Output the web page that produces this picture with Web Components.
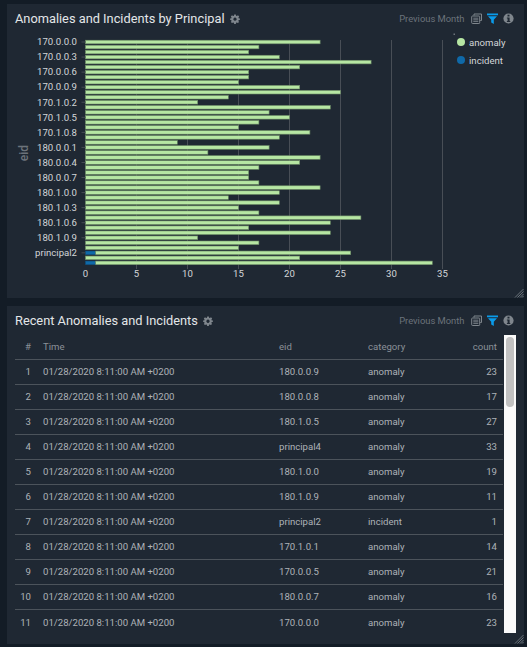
<!DOCTYPE html>
<html><head><meta charset="utf-8">
<style>
html,body{margin:0;padding:0;background:#131c26;}
body{width:527px;height:647px;overflow:hidden;font-family:Roboto,"Liberation Sans",sans-serif;}
#page{display:flex;flex-direction:column;gap:8px;padding:4px 3px 3px 7px;box-sizing:border-box;height:647px;}
</style></head><body>
<div id="page">
<x-panel heading="Anomalies and Incidents by Principal" style="height:294px"><x-bar-chart></x-bar-chart></x-panel>
<x-panel heading="Recent Anomalies and Incidents" style="height:338px"><x-data-table></x-data-table></x-panel>
</div>
<script>
const gear='<svg width="10" height="10" viewBox="0 0 24 24"><path fill="#7f868d" fill-rule="evenodd" d="M10 1h4l.6 3.100 2 .8L19.200 3.200 22 6l-1.700 2.600.8 2L24 11v3l-3.100.6-.8 2L21.800 19 19 21.800l-2.600-1.700-2 .8L14 24h-4l-.6-3.100-2-.8L4.800 21.800 2 19l1.700-2.400-.8-2L0 14v-3l2.900-.4.8-2L2 6l2.800-2.800 2.600 1.700 2-.8zM12 8.500a4 4 0 1 0 .01 0z"/></svg>';
const copy='<svg width="11" height="11" viewBox="0 0 11 11"><g fill="none" stroke="#7f868d"><path d="M3 2.500V1h7.500v6.500H9.200" /><rect x=".7" y="3" width="8" height="7.500" rx=".8" fill="#1f2833"/><path d="M2.300 5.200h5M2.300 6.800h5M2.300 8.400h5" stroke-width=".9"/></g></svg>';
const funnel='<svg width="11" height="11" viewBox="0 0 11 11"><path fill="#0a9bea" d="M0 .5h11v1.700H0zM1 3.200h9L6.800 6.800V11L4.200 9.500V6.800z"/></svg>';
const info='<svg width="11" height="11" viewBox="0 0 11 11"><circle cx="5.500" cy="5.500" r="5.100" fill="#7f868d"/><rect x="4.500" y="1.700" width="2" height="1.800" fill="#1f2833"/><path fill="#1f2833" d="M3.900 4.400h2.700v3.600h.7v1H3.900V8h.7V5.400h-.7z"/></svg>';

class XPanel extends HTMLElement{
  constructor(){super();this.attachShadow({mode:'open'}).innerHTML=`<style>
  :host{display:flex;flex-direction:column;position:relative;background:#1f2833;color:#e3e6e8;font-family:Roboto,"Liberation Sans",sans-serif;}
  header{display:flex;align-items:center;height:29px;padding:0 10.500px 0 8px;flex:none;}
  h2{margin:0;font-weight:400;font-size:12.800px;color:#e3e6e8;white-space:nowrap;}
  .gear{display:flex;margin-left:5px;}
  .range{margin-left:auto;font-size:9.400px;color:#6c737b;}
  .ic{display:flex;gap:5px;margin-left:6px;}
  .ic span{display:flex;}
  main{flex:1;min-height:0;position:relative;}
  .grip{position:absolute;right:.5px;bottom:0;width:10px;height:10px;}
  </style>
  <header><h2></h2><span class="gear">${gear}</span><span class="range">Previous Month</span>
  <span class="ic"><span>${copy}</span><span>${funnel}</span><span>${info}</span></span></header>
  <main><slot></slot></main>
  <svg class="grip" viewBox="0 0 10 10"><path d="M1 9.500L9.500 1M3.500 9.500L9.500 3.500M6 9.500L9.500 6M8 9.500L9.500 8" stroke="#7f868d" stroke-width=".8" fill="none"/></svg>`;
  this.shadowRoot.querySelector('h2').textContent=this.getAttribute('heading');}
}
customElements.define('x-panel',XPanel);

const vals=[23,17,16,19,28,21,16,16,15,21,25,14,11,24,18,20,17,15,22,19,9,18,12,23,21,17,16,16,17,23,19,14,19,15,17,27,24,16,24,11,17,15,26,21,34];
const inc={42:1,44:1};
const labels=['170.0.0.0','170.0.0.3','170.0.0.6','170.0.0.9','170.1.0.2','170.1.0.5','170.1.0.8','180.0.0.1','180.0.0.4','180.0.0.7','180.1.0.0','180.1.0.3','180.1.0.6','180.1.0.9','principal2'];
class XBarChart extends HTMLElement{
  constructor(){super();
    const X0=78.5,U=10.2,Y0=9,P=5.02,H=3.600;
    let s='';
    for(let k=1;k<=7;k++){const x=X0+k*5*U;s+=`<line x1="${x}" x2="${x}" y1="7" y2="236" stroke="#484e56"/>`;}
    vals.forEach((v,i)=>{const y=Y0+i*P-H/2,st=inc[i]||0;
      if(st)s+=`<rect x="${X0}" y="${y}" width="${st*U}" height="${H}" fill="#0f69a8" stroke="#0e4f7d" stroke-width=".5"/>`;
      s+=`<rect x="${X0+st*U}" y="${y}" width="${(v-st)*U}" height="${H}" fill="#b6e6a3" stroke="#6d8c66" stroke-width=".6"/>`;});
    labels.forEach((l,i)=>{const y=Y0+i*3*P;
      s+=`<line x1="${X0-4}" x2="${X0}" y1="${y}" y2="${y}" stroke="#454c54"/><text x="${X0-8.500}" y="${y+3.300}" text-anchor="end" class="t">${l}</text>`;});
    for(let k=0;k<=7;k++){s+=`<text x="${X0+k*5*U}" y="244" text-anchor="middle" class="t">${k*5}</text>`;}
    s+=`<text transform="translate(21 120) rotate(-90)" text-anchor="middle" class="ax">eid</text>`;
    s+=`<rect x="446.500" y=".5" width="1.500" height="1.500" fill="#6c737b"/>`;
    s+=`<circle cx="454" cy="9" r="4" fill="#b6e6a3"/><text x="462" y="12.500" class="l">anomaly</text>`;
    s+=`<circle cx="454" cy="27" r="4" fill="#0f69a8"/><text x="462" y="30.500" class="l">incident</text>`;
    this.attachShadow({mode:'open'}).innerHTML=`<style>
    :host{display:block;height:100%;}
    svg{display:block;width:517px;height:265px;}
    text{font-family:Roboto,"Liberation Sans",sans-serif;}
    .t{font-size:9.600px;fill:#d3d6d9;}
    .l{font-size:9.600px;fill:#d3d6d9;}
    .ax{font-size:12px;fill:#6c737b;font-weight:500;}
    </style><svg viewBox="0 0 517 265">${s}</svg>`;
  }
}
customElements.define('x-bar-chart',XBarChart);

const rows=[['180.0.0.9','anomaly',23],['180.0.0.8','anomaly',17],['180.1.0.5','anomaly',27],['principal4','anomaly',33],['180.1.0.0','anomaly',19],['180.1.0.9','anomaly',11],['principal2','incident',1],['170.1.0.1','anomaly',14],['170.0.0.5','anomaly',21],['180.0.0.7','anomaly',16],['170.0.0.0','anomaly',23]];
class XDataTable extends HTMLElement{
  constructor(){super();
    const cell=(a,b,c,d,e)=>`<span class="n">${a}</span><span>${b}</span><span>${c}</span><span>${d}</span><span class="r">${e}</span>`;
    const body=rows.map((r,i)=>`<div class="row${i==rows.length-1?' last':''}">${cell(i+1,'01/28/2020 8:11:00 AM +0200',r[0],r[1],r[2])}</div>`).join('');
    this.attachShadow({mode:'open'}).innerHTML=`<style>
    :host{display:flex;padding:0 8px 11px 8px;height:100%;box-sizing:border-box;font-size:9.600px;color:#aeb3b8;}
    .tbl{flex:1;min-width:0;}
    .row{display:grid;grid-template-columns:28px 236px 89px 1fr auto;height:25px;align-items:center;border-bottom:1px solid #4c535b;box-sizing:border-box;padding:0 6px 1px 0;}
    .row.head{color:#8b9198;}
    .row.last{border-bottom:none;}
    .n{text-align:right;padding-right:12px;}
    .r{text-align:right;}
    .sb{flex:none;width:12px;margin-left:1px;background:#fafafa;padding:2px;box-sizing:border-box;}
    .th{width:8px;height:70px;background:#c1c1c1;border-radius:4px;}
    </style><div class="tbl"><div class="row head">${cell('#','Time','eid','category','count')}</div>${body}</div><div class="sb"><div class="th"></div></div>`;
  }
}
customElements.define('x-data-table',XDataTable);
</script>
</body></html>
